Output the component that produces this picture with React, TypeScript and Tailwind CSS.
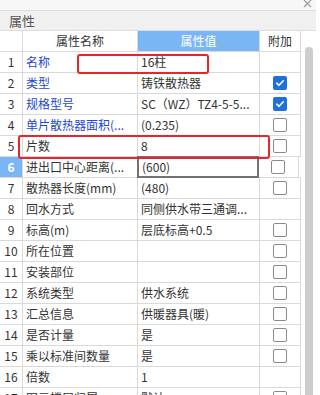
import React from "react";

type Row = { name: string; value: string; blue?: boolean; cb: "none" | "on" | "off" };

const rows: Row[] = [
  { name: "名称", value: "16柱", blue: true, cb: "none" },
  { name: "类型", value: "铸铁散热器", blue: true, cb: "on" },
  { name: "规格型号", value: "SC（WZ）TZ4-5-5...", blue: true, cb: "on" },
  { name: "单片散热器面积(...", value: "(0.235)", blue: true, cb: "off" },
  { name: "片数", value: "8", cb: "off" },
  { name: "进出口中心距离(...", value: "(600)", cb: "off" },
  { name: "散热器长度(mm)", value: "(480)", cb: "off" },
  { name: "回水方式", value: "同侧供水带三通调...", cb: "none" },
  { name: "标高(m)", value: "层底标高+0.5", cb: "off" },
  { name: "所在位置", value: "", cb: "off" },
  { name: "安装部位", value: "", cb: "off" },
  { name: "系统类型", value: "供水系统", cb: "off" },
  { name: "汇总信息", value: "供暖器具(暖)", cb: "off" },
  { name: "是否计量", value: "是", cb: "off" },
  { name: "乘以标准间数量", value: "是", cb: "off" },
  { name: "倍数", value: "1", cb: "none" },
  { name: "图元楼层归属", value: "默认", cb: "off" },
];

function Check({ state }: { state: "none" | "on" | "off" }) {
  if (state === "none") return null;
  if (state === "on")
    return (
      <div className="w-[14px] h-[14px] rounded-[2px] bg-[#1f6fdc] flex items-center justify-center">
        <svg width="10" height="10" viewBox="0 0 10 10">
          <path d="M1.8 5.2 L4 7.3 L8.3 2.8" fill="none" stroke="#fff" strokeWidth="1.6" strokeLinecap="round" strokeLinejoin="round" />
        </svg>
      </div>
    );
  return <div className="w-[14px] h-[14px] rounded-[2px] border border-[#8a8a8a] bg-white" />;
}

export default function App() {
  return (
    <div
      className="relative w-[316px] h-[395px] overflow-hidden bg-white text-[12px] text-[#333]"
      style={{ fontFamily: '"Noto Sans CJK SC", "Microsoft YaHei", sans-serif' }}
    >
      <div className="h-[10px] bg-[#f7f7f7] flex justify-end items-start pr-[4px]">
        <svg width="9" height="9" viewBox="0 0 9 9" className="-mt-[1px]">
          <path d="M1 1 L8 8 M8 1 L1 8" stroke="#9a9a9a" strokeWidth="1.2" />
        </svg>
      </div>
      <div className="h-[21px] bg-[#f0f0f0] border-t border-b border-[#dcdcdc] flex items-center pl-[9px] text-[13px] text-[#555] leading-none">
        属性
      </div>
      <div className="flex">
        <div className="w-[301px] flex flex-col">
          <div className="flex h-[21px] border-b border-[#d9d9d9]">
            <div className="w-[23px] border-r border-[#d9d9d9]" />
            <div className="w-[115px] border-r border-[#d9d9d9] flex items-center justify-center">属性名称</div>
            <div className="w-[122px] border-r border-[#d9d9d9] bg-[#7ab6f4] text-white flex items-center justify-center">属性值</div>
            <div className="w-[41px] border-r border-[#d9d9d9] flex items-center justify-center">附加</div>
          </div>
          {rows.map((r, i) => {
            const sel = i === 5;
            return (
              <div key={i} className="flex h-[21px] border-b border-[#d9d9d9] leading-none">
                <div
                  className={
                    sel
                      ? "w-[23px] border-r border-[#d9d9d9] bg-[#7ab6f4] text-white font-bold flex items-center justify-center"
                      : "w-[23px] border-r border-[#d9d9d9] flex items-center justify-center"
                  }
                >
                  {i + 1}
                </div>
                <div
                  className={
                    r.blue
                      ? "w-[115px] border-r border-[#d9d9d9] flex items-center pl-[3px] whitespace-nowrap overflow-hidden text-[#2347d6]"
                      : "w-[115px] border-r border-[#d9d9d9] flex items-center pl-[3px] whitespace-nowrap overflow-hidden"
                  }
                >
                  {r.name}
                </div>
                <div
                  className={
                    sel
                      ? "w-[122px] -mt-px -ml-px h-[22px] border-2 border-[#727272] flex items-center pl-[3px] whitespace-nowrap overflow-hidden"
                      : "w-[122px] border-r border-[#d9d9d9] flex items-center pl-[3px] whitespace-nowrap overflow-hidden"
                  }
                >
                  {r.value}
                </div>
                <div className={sel ? "w-[41px] -ml-[1px] border-r border-[#d9d9d9] flex items-center justify-center" : "w-[41px] border-r border-[#d9d9d9] flex items-center justify-center"}>
                  <Check state={r.cb} />
                </div>
              </div>
            );
          })}
        </div>
        <div className="flex-1 pl-[4px] pt-[16px]">
          <div className="w-[8px] h-[400px] bg-[#cdcdcd] rounded-t-[4px]" />
        </div>
      </div>
      <div className="absolute left-[77px] top-[54px] w-[132px] h-[20px] border-2 border-[#e8252a] rounded-[3px]" />
      <div className="absolute left-[18px] top-[135px] w-[252px] h-[24px] border-2 border-[#e8252a] rounded-[3px]" />
    </div>
  );
}
